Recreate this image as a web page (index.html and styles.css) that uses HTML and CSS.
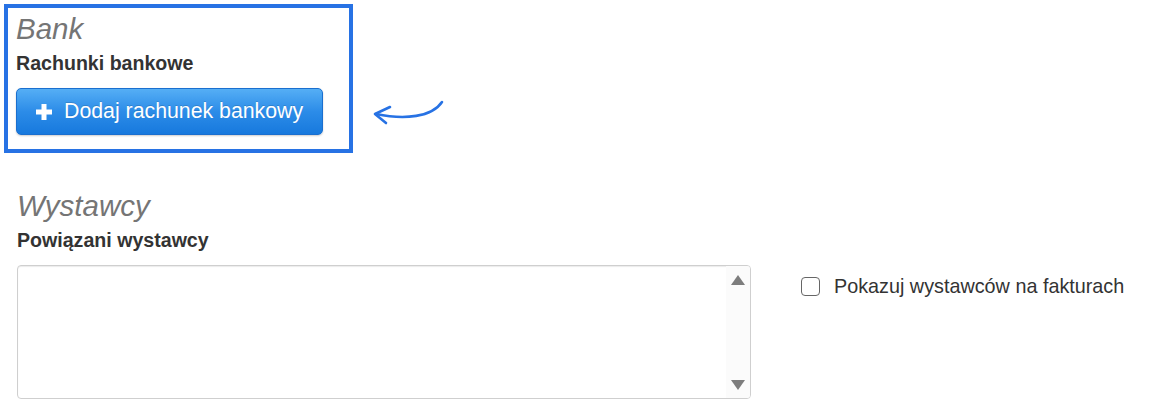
FILE: index.html
```html
<!DOCTYPE html>
<html lang="pl">
  <head>
    <meta charset="UTF-8" />
    <meta name="viewport" content="width=device-width, initial-scale=1.0" />
    <title>Ustawienia firmy</title>
    <link rel="stylesheet" href="styles.css">
  </head>
  <body>
    <div class="page">
      <div class="bank-row">
        <section class="panel panel-highlight">
          <h2 class="section-title">Bank</h2>
          <div class="field-label">Rachunki bankowe</div>
          <button type="button" class="btn-primary">
            <svg class="icon-plus" viewBox="0 0 16 16" aria-hidden="true">
              <path d="M5.5 0h5v5.5H16v5h-5.5V16h-5v-5.5H0v-5h5.5z" />
            </svg>
            Dodaj rachunek bankowy
          </button>
        </section>
        <svg class="hint-arrow" viewBox="0 0 80 34" aria-hidden="true">
          <path d="M72 7 C62 22, 35 25, 6 19" />
          <path d="M20 12 L5 19 L16 28" />
        </svg>
      </div>

      <section class="panel panel-issuers">
        <h2 class="section-title">Wystawcy</h2>
        <div class="field-label">Powiązani wystawcy</div>
        <div class="issuers-row">
          <div class="listbox">
            <div class="listbox-body"></div>
            <div class="listbox-scroll">
              <span class="arrow-up"></span>
              <span class="arrow-down"></span>
            </div>
          </div>
          <label class="check">
            <span class="check-box"></span>
            Pokazuj wystawców na fakturach
          </label>
        </div>
      </section>
    </div>
  </body>
</html>
```

FILE: styles.css
```css
body {
  font-family: "Liberation Sans", Arial, sans-serif;
  background-color: #fff;
  color: #333;
  margin: 0;
  padding: 0;
}

.page {
  padding: 4px;
}

.bank-row {
  display: flex;
  align-items: flex-start;
}

.panel-highlight {
  width: 349px;
  box-sizing: border-box;
  border: 4px solid #2772e4;
  padding: 4px 8px 14px;
}

.hint-arrow {
  width: 80px;
  height: 34px;
  margin-top: 91px;
  margin-left: 17px;
  fill: none;
  stroke: #2772e4;
  stroke-width: 2.6;
  stroke-linecap: round;
  stroke-linejoin: round;
}

.panel-issuers {
  margin-top: 36px;
  padding-left: 13px;
}

.section-title {
  margin: 0;
  font-size: 29.5px;
  line-height: 33px;
  font-weight: normal;
  font-style: italic;
  color: #757575;
}

.field-label {
  margin-top: 7px;
  font-size: 19.6px;
  line-height: 22px;
  font-weight: bold;
  color: #333;
}

.btn-primary {
  display: flex;
  align-items: center;
  gap: 12px;
  height: 47px;
  margin-top: 14px;
  padding: 0 19px;
  border: 1px solid #1a6fcf;
  border-radius: 5px;
  background: linear-gradient(to bottom, #55aef5 0%, #2c8ce8 50%, #1779dd 100%);
  box-shadow: 0 1px 2px rgba(0, 0, 0, 0.2);
  color: #fff;
  font-family: "Liberation Sans", Arial, sans-serif;
  font-size: 21.3px;
  text-shadow: 0 -1px 0 rgba(0, 0, 0, 0.15);
  cursor: pointer;
}

.icon-plus {
  width: 16px;
  height: 16px;
  fill: #fff;
}

.issuers-row {
  display: flex;
  align-items: flex-start;
  margin-top: 14px;
}

.listbox {
  display: flex;
  width: 734px;
  height: 134px;
  box-sizing: border-box;
  border: 1px solid #cfcfcf;
  border-radius: 4px;
  box-shadow: inset 0 1px 1px rgba(0, 0, 0, 0.08);
  overflow: hidden;
}

.listbox-body {
  flex: 1;
}

.listbox-scroll {
  width: 24px;
  display: flex;
  flex-direction: column;
  justify-content: space-between;
  align-items: center;
  padding: 9px 0 8px;
  background-color: #fbfbfb;
}

.arrow-up,
.arrow-down {
  width: 0;
  height: 0;
  border-left: 7px solid transparent;
  border-right: 7px solid transparent;
}

.arrow-up {
  border-bottom: 10px solid #7d7d7d;
}

.arrow-down {
  border-top: 10px solid #7d7d7d;
}

.check {
  display: flex;
  align-items: center;
  gap: 14px;
  margin-top: 10px;
  margin-left: 50px;
  font-size: 19.8px;
  line-height: 22px;
  color: #333;
}

.check-box {
  width: 19px;
  height: 19px;
  box-sizing: border-box;
  border: 1.5px solid #666;
  border-radius: 4px;
  background-color: #fff;
}
```
